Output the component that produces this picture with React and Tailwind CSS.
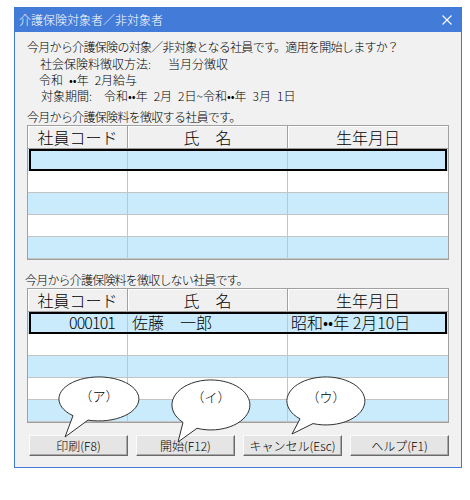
import React from "react";

const COLS = "grid grid-cols-[100px_160px_1fr]";

function Table({ rows }) {
  return (
    <div className="border border-[#a0a0a0] bg-white">
      <div className={`${COLS} h-[23px] bg-[#f0f0f0] text-[16px] leading-[22px]`}>
        <div className="border-r border-b border-[#a0a0a0] text-center shadow-[inset_1px_1px_0_#ffffff]">社員コード</div>
        <div className="border-r border-b border-[#a0a0a0] text-center shadow-[inset_1px_1px_0_#ffffff]">氏　名</div>
        <div className="border-b border-[#a0a0a0] text-center shadow-[inset_1px_1px_0_#ffffff]">生年月日</div>
      </div>
      {rows.map((r, i) => (
        <div
          key={i}
          className={`relative ${COLS} h-[22px] text-[16px] leading-[21px] ${i % 2 === 0 ? "bg-[#c9ebfb]" : "bg-white"}`}
        >
          <div className="border-r border-b border-[#c4c4c4] text-right pr-[12px] tracking-[-0.9px]">{r ? r[0] : ""}</div>
          <div className="border-r border-b border-[#c4c4c4] pl-[4px]">{r ? r[1] : ""}</div>
          <div className="border-b border-[#c4c4c4] pl-[3px]">{r ? r[2] : ""}</div>
          {i === 0 && (
            <div className="absolute left-[1px] right-[1px] top-0 bottom-0 border-2 border-black pointer-events-none" />
          )}
        </div>
      ))}
    </div>
  );
}

function Btn({ children }) {
  return (
    <div className="w-[99px] h-[21px] bg-[#e5e5e5] border border-t-[#fbfbfb] border-l-[#fbfbfb] border-r-[#6a6a6a] border-b-[#6a6a6a] shadow-[inset_-1px_-1px_0_#a8a8a8] flex items-center justify-center text-[12px] leading-[16px]">
      {children}
    </div>
  );
}

function Bubble({ d, tx, ty, label }) {
  return (
    <g>
      <path d={d} fill="#ffffff" stroke="#303030" strokeWidth="1" />
      <text
        x={tx}
        y={ty}
        textAnchor="middle"
        dominantBaseline="central"
        fontSize="13"
        fontWeight="300"
        fontFamily="'Noto Sans CJK JP', sans-serif"
        fill="#000"
      >
        {label}
      </text>
    </g>
  );
}

export default function App() {
  return (
    <div className="relative w-[470px] h-[500px] bg-white pt-[7px] pl-[14px] font-['Noto_Sans_CJK_JP',sans-serif] font-light text-black">
      <div className="w-[448px] h-[461px] border border-[#3f7ad8] bg-[#f1f1f1] flex flex-col">
        <div className="h-[24px] bg-[#437bd8] flex items-center justify-between pl-[4px] pr-[9px] text-white text-[12px] leading-[16px]">
          <span>介護保険対象者／非対象者</span>
          <svg width="10" height="10" viewBox="0 0 10 10">
            <path d="M0.5 0.5 L9.5 9.5 M9.5 0.5 L0.5 9.5" stroke="#ffffff" strokeWidth="1.1" />
          </svg>
        </div>
        <div className="px-[12px] pt-[7px] flex flex-col text-[12px] leading-[16px]">
          <div className="h-[16px] tracking-[-0.7px] whitespace-nowrap">今月から介護保険の対象／非対象となる社員です。適用を開始しますか？</div>
          <div className="h-[16px] mt-[1px] pl-[13px] flex">
            <span>社会保険料徴収方法:</span>
            <span className="ml-[17px]">当月分徴収</span>
          </div>
          <div className="h-[16px] pl-[12px] whitespace-pre">令和{"\u2002"}••年{"\u2002"}2月給与</div>
          <div className="h-[16px] pl-[14px] whitespace-pre">
            対象期間:{"\u2002\u2002"}令和••年{"\u2002"}2月{"\u2002"}2日~令和••年{"\u2002"}3月{"\u2002"}1日
          </div>
          <div className="h-[16px] mt-[5px] tracking-[-0.7px]">今月から介護保険料を徴収する社員です。</div>
          <Table rows={[null, null, null, null, null]} />
          <div className="h-[16px] mt-[12px] -ml-[2px] tracking-[-0.8px]">今月から介護保険料を徴収しない社員です。</div>
          <Table rows={[["000101", "佐藤　一郎", "昭和••年 2月10日"], null, null, null, null]} />
          <div className="mt-[12px] pl-[2px] flex gap-[8px]">
            <Btn>印刷(F8)</Btn>
            <Btn>開始(F12)</Btn>
            <Btn>キャンセル(Esc)</Btn>
            <Btn>ヘルプ(F1)</Btn>
          </div>
        </div>
      </div>
      <svg className="absolute left-0 top-0 pointer-events-none" width="470" height="500" viewBox="0 0 470 500">
        <Bubble d="M73 415.7 A40 22 0 1 1 88 420.1 L65 437 Z" tx={99} ty={395} label="（ア）" />
        <Bubble d="M183 422.4 A39 25 0 1 1 197 428.3 L178 442 Z" tx={211} ty={396} label="（イ）" />
        <Bubble d="M300 418.9 A39 24 0 1 1 313 423.6 L292 434 Z" tx={326} ty={396} label="（ウ）" />
      </svg>
    </div>
  );
}
